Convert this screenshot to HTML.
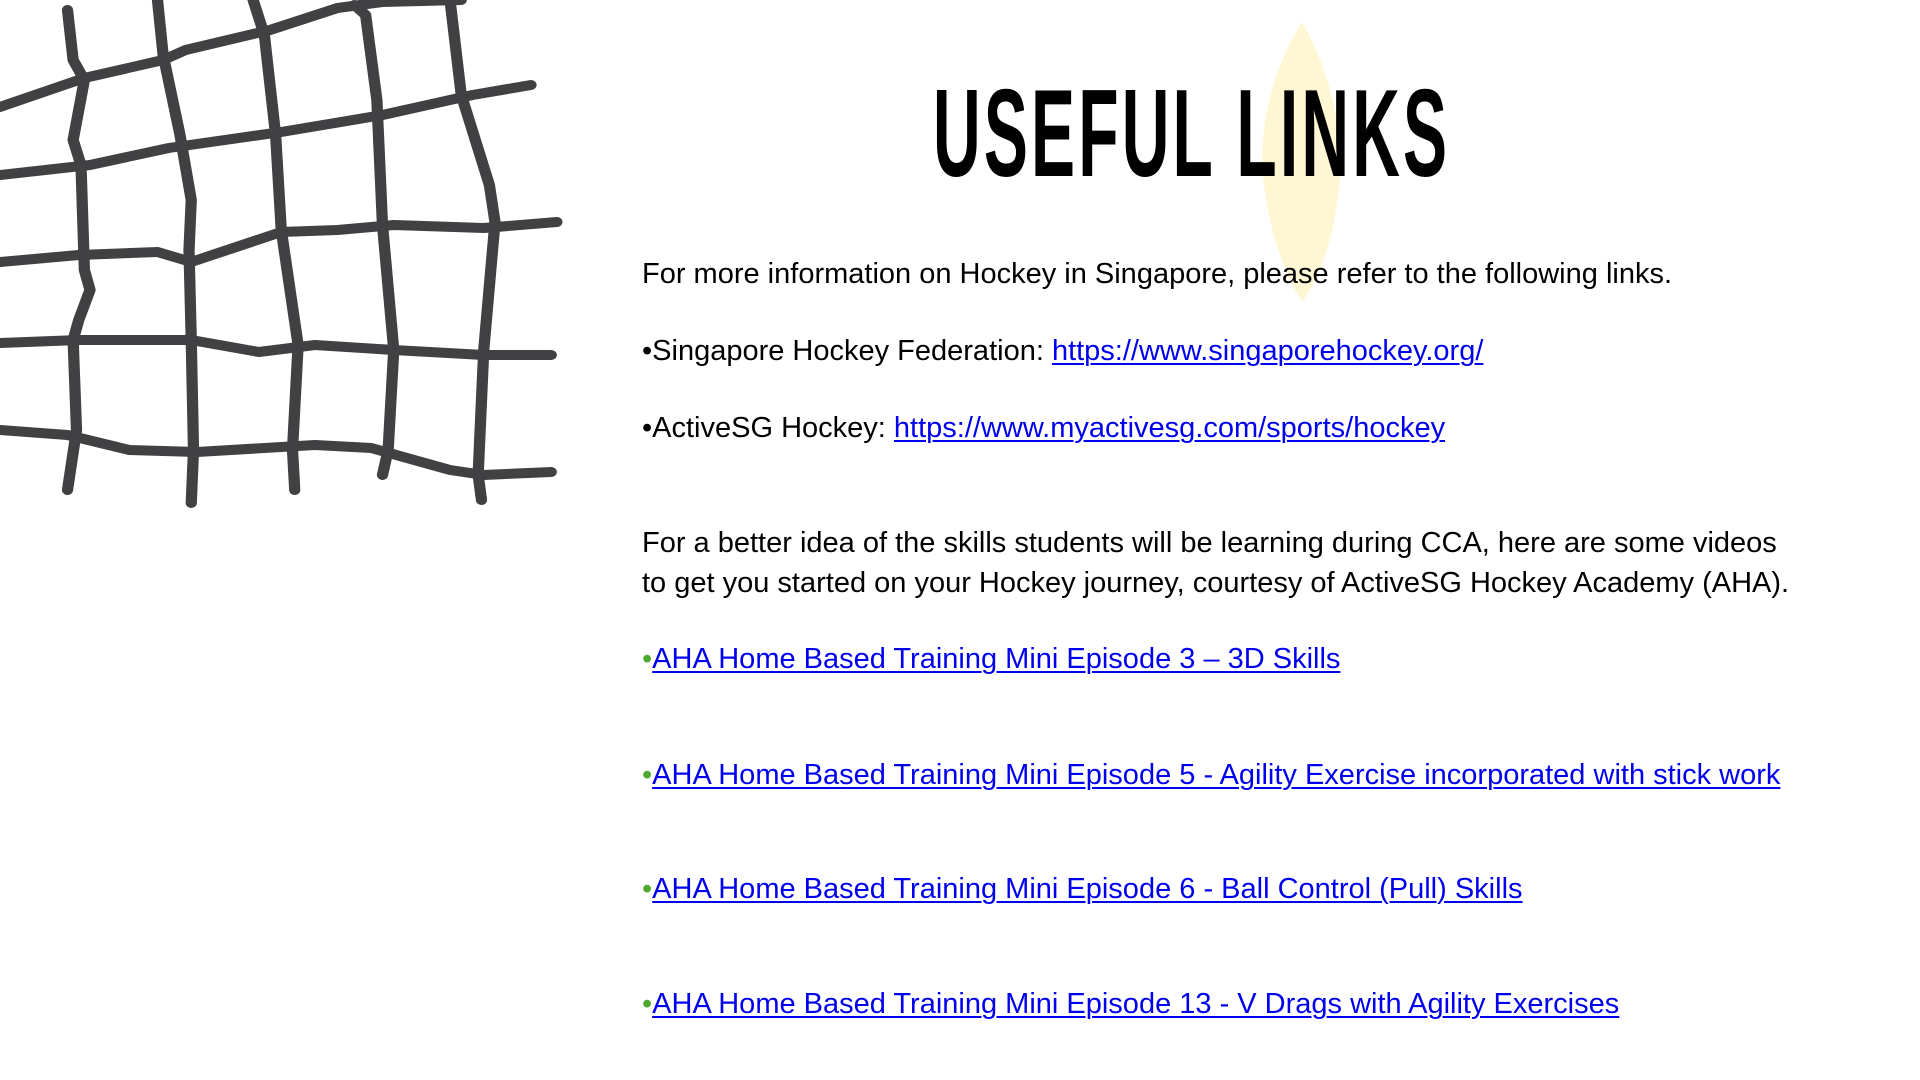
<!DOCTYPE html>
<html><head><meta charset="utf-8"><style>
html,body{margin:0;padding:0;background:#fff;width:1920px;height:1080px;overflow:hidden;position:relative;font-family:"Liberation Sans",sans-serif;}
.t{position:absolute;left:642px;font-size:29px;color:#000;white-space:nowrap;line-height:36px;}
a{color:#0000ee;text-decoration:underline;text-decoration-thickness:2px;text-underline-offset:3px;}
.g{color:#4ea72e;}
#title{position:absolute;left:933px;top:72px;font-size:124px;font-weight:bold;font-family:"Liberation Sans Narrow","Liberation Sans",sans-serif;transform-origin:0 0;transform:scaleX(0.532);letter-spacing:6px;line-height:124px;}
</style></head><body>
<svg width="1920" height="1080" style="position:absolute;left:0;top:0">
<path d="M1302,22 C1335,80 1348,150 1336,210 C1330,250 1315,285 1302,302 C1282,270 1265,220 1262,160 C1262,110 1278,60 1302,22 Z" fill="#fff7d4"/>
<g fill="none" stroke="#414143" stroke-width="10" stroke-linecap="round" stroke-linejoin="round" transform="scale(1.125,1)">
<polyline points="0,107 75,78 145,60 165,50 240,30 300,8 340,2 410,0"/>
<polyline points="0,175 80,165 150,148 250,132 340,115 420,95 472,85"/>
<polyline points="0,262 70,255 140,252 170,262 250,232 300,230 350,225 430,228 495,222"/>
<polyline points="0,343 70,340 170,340 230,352 280,345 350,350 430,355 490,355"/>
<polyline points="0,430 60,435 115,450 175,452 280,445 330,448 400,470 430,475 490,472"/>
<polyline points="60,10 65,60 75,80 65,140 72,165 75,270 80,290 70,320 65,340 68,430 60,490"/>
<polyline points="140,0 145,55 160,135 170,200 168,250 170,340 172,450 170,503"/>
<polyline points="225,0 235,35 245,135 250,230 265,345 260,450 262,490"/>
<polyline points="315,5 325,15 335,100 340,225 350,350 345,450 340,475"/>
<polyline points="400,0 410,95 435,185 440,222 430,350 425,475 428,500"/>
</g>
</svg>
<div id="title">USEFUL LINKS</div>
<div class="t" style="top:256px">For more information on Hockey in Singapore, please refer to the following links.</div>
<div class="t" style="top:333px">•Singapore Hockey Federation: <a>https://www.singaporehockey.org/</a></div>
<div class="t" style="top:410px">•ActiveSG Hockey: <a>https://www.myactivesg.com/sports/hockey</a></div>
<div class="t" style="top:523px;line-height:40px">For a better idea of the skills students will be learning during CCA, here are some videos<br>to get you started on your Hockey journey, courtesy of ActiveSG Hockey Academy (AHA).</div>
<div class="t" style="top:641px"><span class="g">•</span><a>AHA Home Based Training Mini Episode 3 – 3D Skills</a></div>
<div class="t" style="top:757px"><span class="g">•</span><a>AHA Home Based Training Mini Episode 5 - Agility Exercise incorporated with stick work</a></div>
<div class="t" style="top:871px"><span class="g">•</span><a>AHA Home Based Training Mini Episode 6 - Ball Control (Pull) Skills</a></div>
<div class="t" style="top:986px"><span class="g">•</span><a>AHA Home Based Training Mini Episode 13 - V Drags with Agility Exercises</a></div>
</body></html>
